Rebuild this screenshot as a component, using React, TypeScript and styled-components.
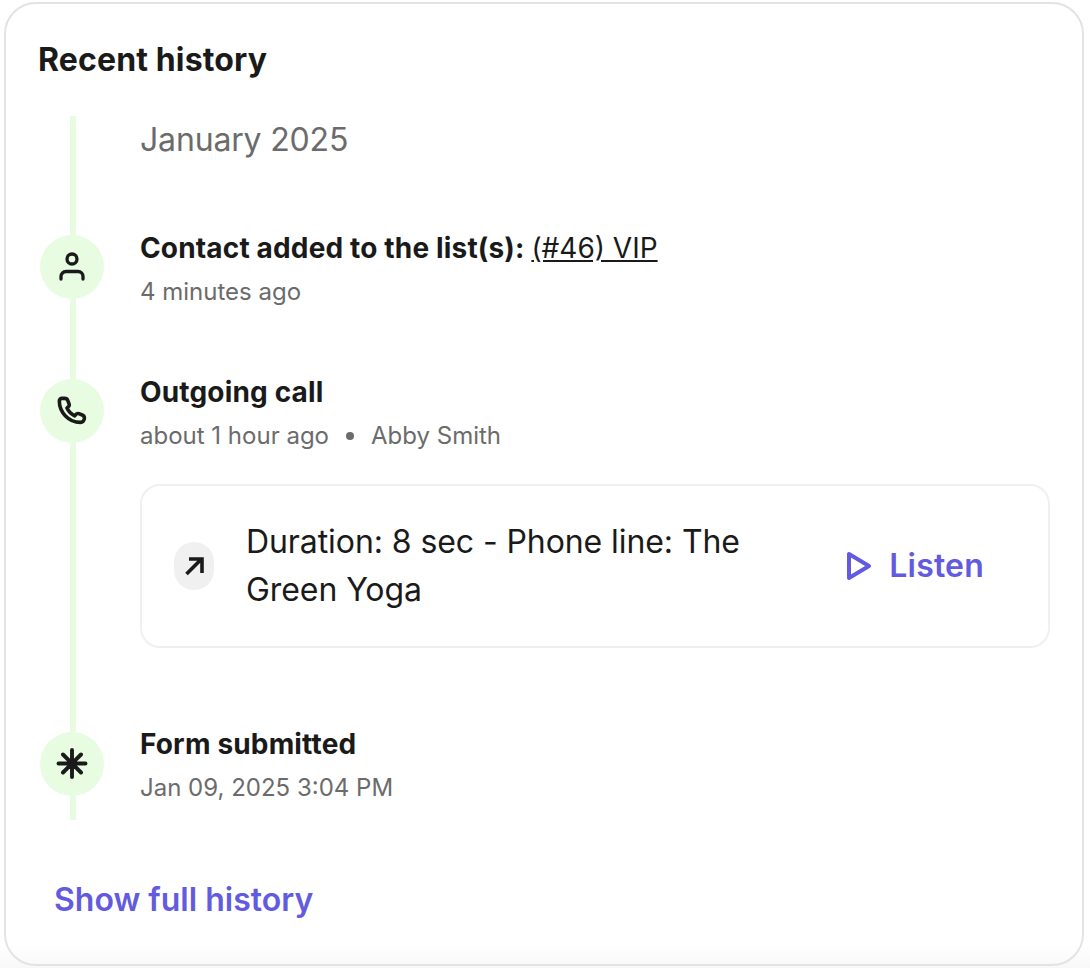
import React from 'react';
import styled, { createGlobalStyle } from 'styled-components';

const Global = createGlobalStyle`
  html, body { margin: 0; padding: 0; background: #fff; }
  body { font-family: Inter, "Liberation Sans", sans-serif; color: #1a1a1a; font-optical-sizing: none; }
  * { box-sizing: border-box; }
`;
const Page = styled.div`
  width: 1090px;
  height: 968px;
  padding: 2px 6px 2px 4px;
  background: linear-gradient(to bottom, #fff 945px, #f8f8f8 968px);
`;
const Card = styled.section`
  height: 964px;
  border: 2px solid #e3e3e3;
  border-radius: 32px;
  padding: 32px 32px 0 32px;
`;
const Title = styled.h2`
  margin: 0;
  font-size: 32px;
  line-height: 48px;
  font-weight: 700;
  letter-spacing: 0.14px;
  color: #1a1a1a;
`;
const Timeline = styled.div`
  position: relative;
  margin-top: 32px;
  height: 704px;
  display: flex;
  flex-direction: column;
`;
const Line = styled.div`
  position: absolute;
  left: 32px;
  top: 0;
  bottom: 0;
  width: 6px;
  background: #e8fce1;
`;
const Month = styled.div`
  margin-left: 102px;
  font-size: 32px;
  line-height: 48px;
  letter-spacing: -0.17px;
  color: #6b6b6b;
`;
const Row = styled.div<{ $top: number }>`
  position: relative;
  display: flex;
  gap: 36px;
  margin-top: ${p => p.$top}px;
`;
const Dot = styled.div<{ $offset?: number }>`
  flex: none;
  width: 64px;
  height: 64px;
  margin-left: 2px;
  margin-top: ${p => p.$offset ?? 7}px;
  border-radius: 50%;
  background: #e8fce1;
  display: flex;
  align-items: center;
  justify-content: center;
`;
const Body = styled.div`
  flex: 1;
  min-width: 0;
`;
const EventTitle = styled.div`
  font-size: 28px;
  line-height: 40px;
  font-weight: 700;
  letter-spacing: 0.16px;
  color: #1a1a1a;
`;
const ListLink = styled.a`
  font-weight: 400;
  letter-spacing: 0;
  color: #1a1a1a;
  text-decoration: underline;
`;
const Meta = styled.div`
  margin-top: 4px;
  font-size: 24px;
  line-height: 40px;
  color: #6b6b6b;
  display: flex;
  align-items: center;
`;
const Bullet = styled.span`
  width: 8px;
  height: 8px;
  border-radius: 50%;
  background: #6b6b6b;
  margin: 0 17px 0 17px;
`;
const CallCard = styled.div`
  margin-top: 28px;
  height: 164px;
  border: 2px solid #f0f0f0;
  border-radius: 20px;
  display: flex;
  align-items: center;
  padding: 0 64px 0 32px;
`;
const CallIcon = styled.div`
  flex: none;
  width: 40px;
  height: 48px;
  border-radius: 20px;
  background: #f0f0f0;
  display: flex;
  align-items: center;
  justify-content: center;
`;
const CallText = styled.div`
  margin-left: 32px;
  width: 560px;
  font-size: 32px;
  line-height: 48px;
  letter-spacing: -0.08px;
  color: #1a1a1a;
`;
const Listen = styled.a`
  margin-left: auto;
  display: flex;
  align-items: center;
  gap: 17px;
  font-size: 32px;
  line-height: 48px;
  font-weight: 600;
  letter-spacing: 0.2px;
  color: #635bdf;
`;
const ShowAll = styled.a`
  display: block;
  margin-top: 56px;
  margin-left: 16px;
  font-size: 32px;
  line-height: 48px;
  font-weight: 600;
  color: #635bdf;
`;

const stroke = { fill: 'none', stroke: '#1a1a1a', strokeWidth: 3.3, strokeLinecap: 'round', strokeLinejoin: 'round' } as const;

export default function App() {
  return (
    <Page>
      <Global />
      <Card>
        <Title>Recent history</Title>
        <Timeline>
          <Line />
          <Month>January 2025</Month>
          <Row $top={64}>
            <Dot>
              <svg width="32" height="32" viewBox="0 0 32 32" {...stroke}>
                <circle cx="16" cy="8" r="5" />
                <path d="M5 28v-2.500a5 5 0 0 1 5-5h12a5 5 0 0 1 5 5V28" />
              </svg>
            </Dot>
            <Body>
              <EventTitle>Contact added to the list(s): <ListLink>(#46) VIP</ListLink></EventTitle>
              <Meta>4 minutes ago</Meta>
            </Body>
          </Row>
          <Row $top={60}>
            <Dot>
              <svg width="32" height="32" viewBox="0 0 24 24" {...stroke} strokeWidth={2.7}>
                <path d="M4.500 2.500h2a2.500 2.500 0 0 1 2.300 1.600l1 2.600a2 2 0 0 1-.6 2.200l-1 .9c1.200 2.600 3.200 4.600 5.800 5.800l.9-1a2 2 0 0 1 2.200-.6l2.600 1a2.500 2.500 0 0 1 1.600 2.300v.2a3 3 0 0 1-3 3C9.500 20.500 2.500 13 2.500 4.500a2 2 0 0 1 2-2Z" />
              </svg>
            </Dot>
            <Body>
              <EventTitle>Outgoing call</EventTitle>
              <Meta>about 1 hour ago<Bullet />Abby Smith</Meta>
              <CallCard>
                <CallIcon>
                  <svg width="20" height="20" viewBox="0 0 20 20" {...stroke} strokeWidth={3.6} strokeLinecap="butt" strokeLinejoin="miter">
                    <path d="M2.500 18 16.500 4M5 3h13v14" />
                  </svg>
                </CallIcon>
                <CallText>Duration: 8 sec - Phone line: The Green Yoga</CallText>
                <Listen>
                  <svg width="26" height="30" viewBox="0 0 26 30" fill="none" stroke="#635bdf" strokeWidth="4" strokeLinejoin="round">
                    <path d="M3 3v24l20-12Z" />
                  </svg>
                  Listen
                </Listen>
              </CallCard>
            </Body>
          </Row>
          <Row $top={76}>
            <Dot $offset={8}>
              <svg width="32" height="32" viewBox="0 0 32 32" {...stroke} strokeWidth={3.9}>
                <path d="M16 2v27M2.500 15.500h27M7 6.500l18 18M25 6.500 7 24.500" />
              </svg>
            </Dot>
            <Body>
              <EventTitle>Form submitted</EventTitle>
              <Meta>Jan 09, 2025 3:04 PM</Meta>
            </Body>
          </Row>
        </Timeline>
        <ShowAll>Show full history</ShowAll>
      </Card>
    </Page>
  );
}
